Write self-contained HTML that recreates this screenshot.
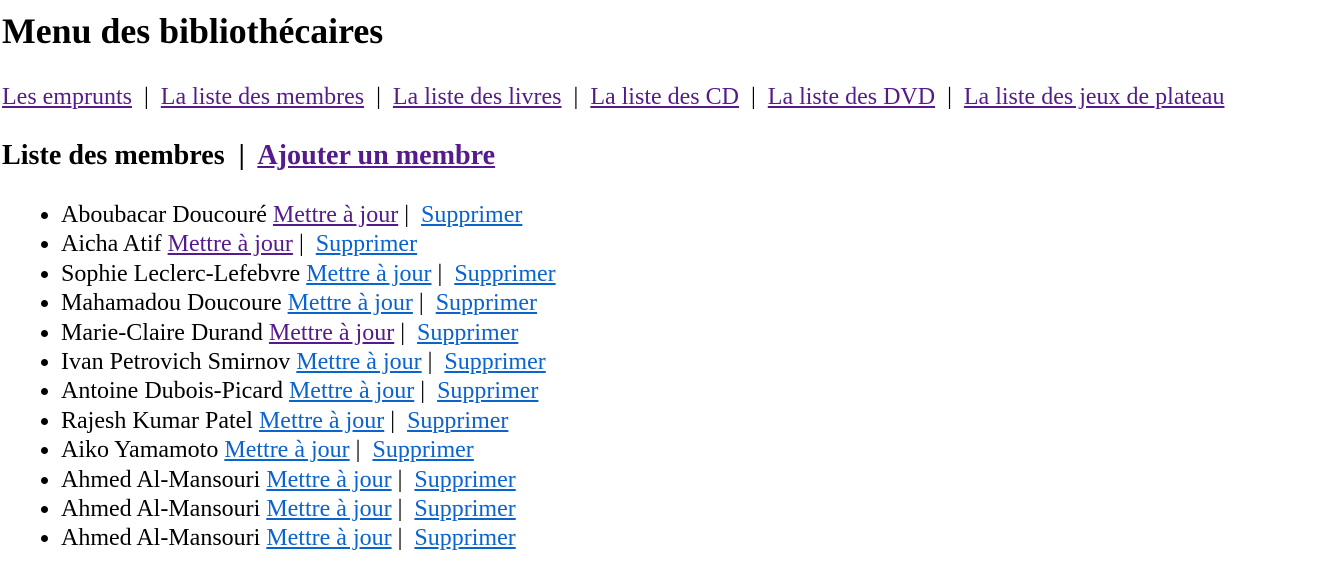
<!DOCTYPE html>
<html><head><meta charset="utf-8"><style>
body{margin:0;font-family:"Liberation Serif",serif;color:#000;background:#fff;width:1317px;height:577px;overflow:hidden;position:relative}
a{color:#0b63ce;text-decoration:underline}
a.v{color:#551a8b}
h1{position:absolute;left:2px;top:11px;margin:0;font-size:35.8px;line-height:41px;font-weight:bold;white-space:nowrap}
.nav{position:absolute;left:2px;top:83px;font-size:24px;line-height:29.4px;white-space:nowrap}
h2{position:absolute;left:2px;top:139px;margin:0;font-size:28.1px;line-height:33px;font-weight:bold;white-space:nowrap}
ul{position:absolute;left:0;top:201px;margin:0;padding-left:61px;font-size:24px;line-height:29.4px;white-space:nowrap}
</style></head><body>
<h1>Menu des bibliothécaires</h1>
<div class="nav"><a class="v">Les emprunts</a>&nbsp; |&nbsp; <a class="v">La liste des membres</a>&nbsp; |&nbsp; <a class="v">La liste des livres</a>&nbsp; |&nbsp; <a class="v">La liste des CD</a>&nbsp; |&nbsp; <a class="v">La liste des DVD</a>&nbsp; |&nbsp; <a class="v">La liste des jeux de plateau</a></div>
<h2>Liste des membres&nbsp; |&nbsp; <a class="v">Ajouter un membre</a></h2>
<ul>
<li>Aboubacar Doucouré <a class="v">Mettre à jour</a> |&nbsp; <a>Supprimer</a></li>
<li>Aicha Atif <a class="v">Mettre à jour</a> |&nbsp; <a>Supprimer</a></li>
<li>Sophie Leclerc-Lefebvre <a>Mettre à jour</a> |&nbsp; <a>Supprimer</a></li>
<li>Mahamadou Doucoure <a>Mettre à jour</a> |&nbsp; <a>Supprimer</a></li>
<li>Marie-Claire Durand <a class="v">Mettre à jour</a> |&nbsp; <a>Supprimer</a></li>
<li>Ivan Petrovich Smirnov <a>Mettre à jour</a> |&nbsp; <a>Supprimer</a></li>
<li>Antoine Dubois-Picard <a>Mettre à jour</a> |&nbsp; <a>Supprimer</a></li>
<li>Rajesh Kumar Patel <a>Mettre à jour</a> |&nbsp; <a>Supprimer</a></li>
<li>Aiko Yamamoto <a>Mettre à jour</a> |&nbsp; <a>Supprimer</a></li>
<li>Ahmed Al-Mansouri <a>Mettre à jour</a> |&nbsp; <a>Supprimer</a></li>
<li>Ahmed Al-Mansouri <a>Mettre à jour</a> |&nbsp; <a>Supprimer</a></li>
<li>Ahmed Al-Mansouri <a>Mettre à jour</a> |&nbsp; <a>Supprimer</a></li>
</ul>
</body></html>
